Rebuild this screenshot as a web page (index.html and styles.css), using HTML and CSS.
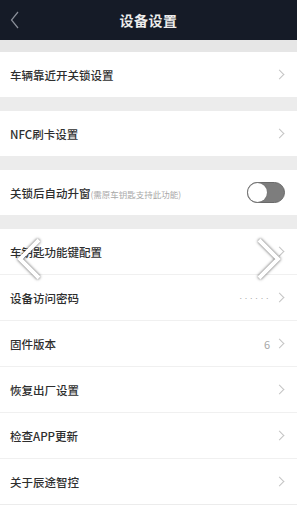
FILE: index.html
```html
<!DOCTYPE html>
<html lang="zh">
<head>
  <meta charset="UTF-8" />
  <meta name="viewport" content="width=device-width, initial-scale=1.0" />
  <title>设备设置</title>
  <link rel="stylesheet" href="styles.css">
</head>
<body>
  <div class="screen">
    <header class="topbar">
      <svg class="back" width="10" height="18" viewBox="0 0 10 18"><path d="M8 1 L1.5 9 L8 17" fill="none" stroke="#8a8f99" stroke-width="1.2"/></svg>
      <h1>设备设置</h1>
    </header>

    <div class="gap first"></div>
    <div class="row">
      <span class="label">车辆靠近开关锁设置</span>
      <span class="chev"></span>
    </div>

    <div class="gap"></div>
    <div class="row">
      <span class="label">NFC刷卡设置</span>
      <span class="chev"></span>
    </div>

    <div class="gap"></div>
    <div class="row">
      <span class="label">关锁后自动升窗<small>(需原车钥匙支持此功能)</small></span>
      <span class="toggle"><span class="knob"></span></span>
    </div>

    <div class="gap"></div>
    <div class="group">
      <div class="row">
        <span class="label">车钥匙功能键配置</span>
        <span class="chev"></span>
      </div>
      <div class="row">
        <span class="label">设备访问密码</span>
        <span class="value dots">••••••</span>
        <span class="chev"></span>
      </div>
      <div class="row">
        <span class="label">固件版本</span>
        <span class="value">6</span>
        <span class="chev"></span>
      </div>
      <div class="row">
        <span class="label">恢复出厂设置</span>
        <span class="chev"></span>
      </div>
      <div class="row">
        <span class="label">检查APP更新</span>
        <span class="chev"></span>
      </div>
      <div class="row">
        <span class="label">关于辰途智控</span>
        <span class="chev"></span>
      </div>
    </div>
    <div class="gap"></div>

    <!-- 图片轮播箭头 -->
    <svg class="slide-arrow prev" width="30" height="46" viewBox="0 0 30 46"><path d="M25 4 L6 23 L25 42" fill="none" stroke="#fff" stroke-width="4"/></svg>
    <svg class="slide-arrow next" width="30" height="46" viewBox="0 0 30 46"><path d="M5 4 L24 23 L5 42" fill="none" stroke="#fff" stroke-width="4"/></svg>
  </div>
</body>
</html>
```

FILE: styles.css
```css
:root {
  --bar: #151b27;
  --bg: #ececec;
  --text: #2e2e2e;
  --muted: #a8a8a8;
  --line: #f0f0f0;
}

body {
  margin: 0;
  background: #fff;
  font-family: 'Noto Sans CJK SC', 'Noto Sans', sans-serif;
  color: var(--text);
}

.screen {
  position: relative;
  width: 297px;
  height: 505px;
  overflow: hidden;
  background: var(--bg);
}

.topbar {
  height: 40px;
  background: var(--bar);
  display: flex;
  align-items: center;
  justify-content: center;
  position: relative;
}

.topbar h1 {
  margin: 0;
  font-size: 14px;
  font-weight: 700;
  color: #ececec;
  letter-spacing: 0.5px;
}

.back {
  position: absolute;
  left: 10px;
  top: 11px;
}

.gap {
  height: 14px;
}

.gap.first {
  height: 12px;
  background: #e6e6e6;
}

.row {
  height: 45px;
  background: #fff;
  display: flex;
  align-items: center;
  padding: 0 12px 0 10px;
}

.group .row + .row {
  border-top: 1px solid var(--line);
}

.label {
  flex: 1;
  font-size: 11.5px;
  font-weight: 500;
}

.label small {
  font-size: 8.5px;
  font-weight: 400;
  color: var(--muted);
}

.value {
  font-size: 11px;
  color: var(--muted);
  margin-right: 6px;
}

.dots {
  font-size: 5px;
  letter-spacing: 0.3px;
}

.chev {
  width: 6px;
  height: 6px;
  border-top: 1px solid #c4c4c4;
  border-right: 1px solid #c4c4c4;
  transform: rotate(45deg);
  margin-right: 2px;
}

.toggle {
  width: 38px;
  height: 21px;
  border-radius: 11px;
  background: #7d7d7d;
  position: relative;
  box-sizing: border-box;
  border: 1px solid #6a6a6a;
}

.knob {
  position: absolute;
  left: 0;
  top: 0;
  width: 19px;
  height: 19px;
  border-radius: 50%;
  background: #fff;
  box-shadow: 0 0 0 1px #7a7a7a;
}

.slide-arrow {
  position: absolute;
  top: 236px;
  filter: drop-shadow(0 0 1.5px rgba(0, 0, 0, 0.7));
}

.slide-arrow.prev {
  left: 14px;
}

.slide-arrow.next {
  left: 254px;
}
```
